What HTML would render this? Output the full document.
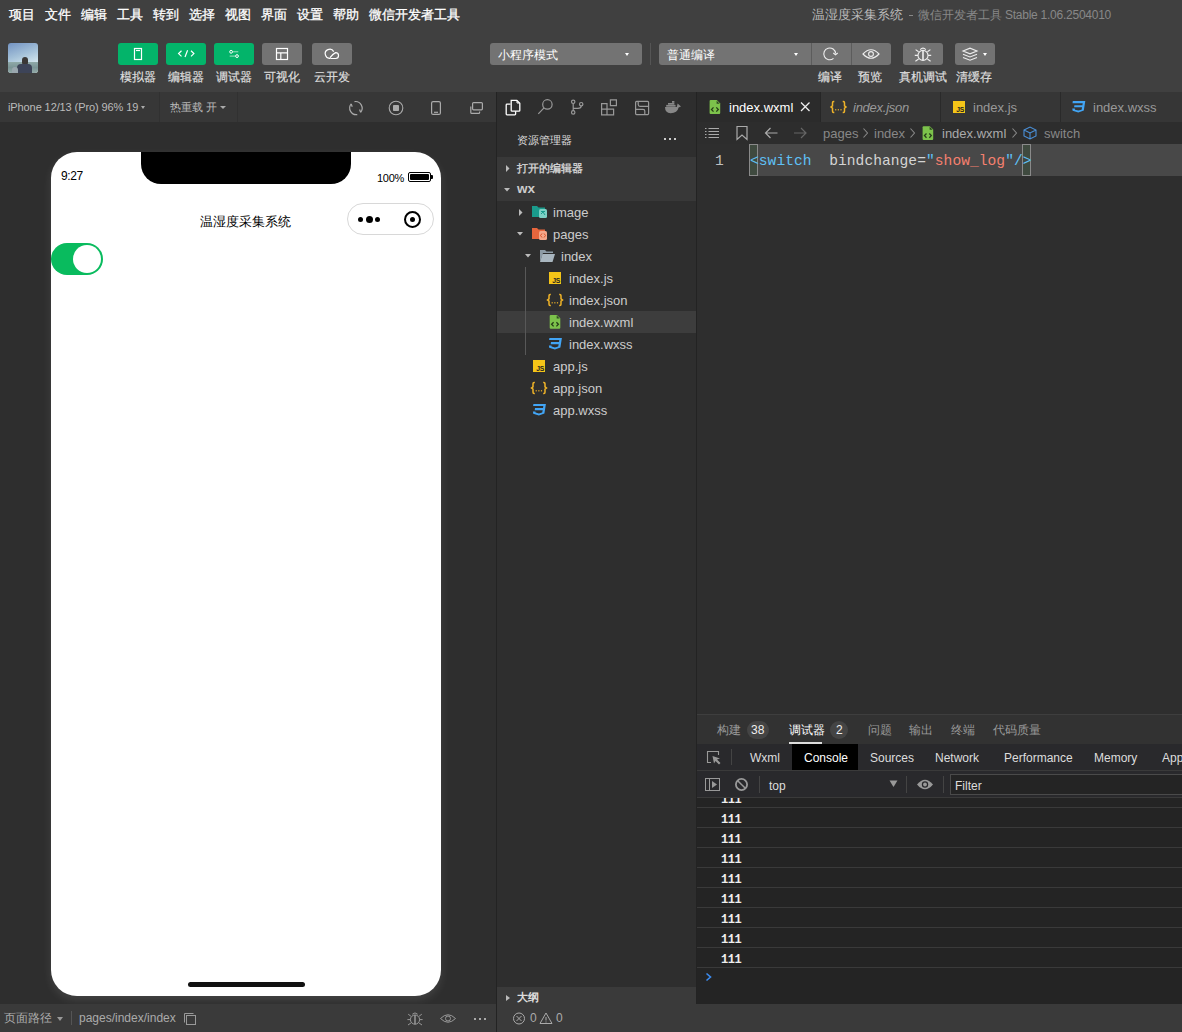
<!DOCTYPE html>
<html><head><meta charset="utf-8">
<style>
*{box-sizing:border-box;margin:0;padding:0}
html,body{width:1182px;height:1032px;overflow:hidden;background:#2d2d2d;font-family:"Liberation Sans",sans-serif;color:#ccc}
.a{position:absolute}
.t{position:absolute;white-space:nowrap;line-height:1}
svg{position:absolute;overflow:visible}
</style></head><body>
<!-- top bars -->
<div class="a" style="left:0;top:0;width:1182px;height:92px;background:#404040"></div>
<div class="t" style="left:9px;top:8px;font-size:13px;color:#fff;word-spacing:0;-webkit-text-stroke:0.3px #fff">
<span style="margin-right:10px">项目</span><span style="margin-right:10px">文件</span><span style="margin-right:10px">编辑</span><span style="margin-right:10px">工具</span><span style="margin-right:10px">转到</span><span style="margin-right:10px">选择</span><span style="margin-right:10px">视图</span><span style="margin-right:10px">界面</span><span style="margin-right:10px">设置</span><span style="margin-right:10px">帮助</span><span>微信开发者工具</span></div>
<div class="t" style="left:812px;top:8px;font-size:13px;color:#bbb">温湿度采集系统</div>
<div class="a" style="left:909px;top:15px;width:4px;height:1px;background:#888"></div>
<div class="t" style="left:918px;top:9px;font-size:12px;color:#888">微信开发者工具</div>
<div class="t" style="left:1005px;top:9px;font-size:12px;color:#888;letter-spacing:-0.25px">Stable 1.06.2504010</div>


<!-- avatar -->
<div class="a" style="left:8px;top:43px;width:30px;height:30px;border-radius:3px;overflow:hidden;background:linear-gradient(160deg,#7393c2 0%,#a3c0d8 40%,#d6e8ee 75%,#eef4ec 100%)">
  <div class="a" style="left:0;top:18.5px;width:30px;height:11.5px;background:linear-gradient(180deg,#8fa9a8 0%,#7b9596 50%,#93aaa8 100%)"></div>
  <div class="a" style="left:13.5px;top:14px;width:6px;height:7.5px;border-radius:3px 3px 2.5px 2.5px;background:#3b3836"></div>
  <div class="a" style="left:9px;top:20.5px;width:15px;height:10px;border-radius:4px 4px 0 0;background:#3d4458"></div>
  <div class="a" style="left:4px;top:24px;width:6px;height:6px;border-radius:3px 3px 0 0;background:#9aa7ae"></div>
</div>
<!-- green buttons -->
<div class="a" style="left:118px;top:43px;width:40px;height:22px;border-radius:3px;background:#03b46a"></div>
<div class="a" style="left:166px;top:43px;width:40px;height:22px;border-radius:3px;background:#03b46a"></div>
<div class="a" style="left:214px;top:43px;width:40px;height:22px;border-radius:3px;background:#03b46a"></div>
<div class="a" style="left:262px;top:43px;width:40px;height:22px;border-radius:3px;background:#737373"></div>
<div class="a" style="left:312px;top:43px;width:40px;height:22px;border-radius:3px;background:#737373"></div>
<svg style="left:0;top:0" width="1182" height="92" fill="none" stroke="#fff" stroke-width="1.2">
  <!-- simulator icon -->
  <rect x="134.5" y="48.5" width="7" height="11" />
  <line x1="136" y1="50.5" x2="140" y2="50.5"/>
  <!-- editor code icon -->
  <path d="M181.5 50.8 L178.6 53.6 L181.5 56.4 M191 50.8 L193.9 53.6 L191 56.4 M185 57 L187.6 50.2"/>
  <!-- debugger sliders -->
  <path d="M233 51.8 H238.3 M229.7 56.1 H235.2" stroke="#9fe0c0" stroke-width="1"/>
  <circle cx="231.1" cy="51.8" r="1.4" stroke-width="1"/><circle cx="237" cy="56.1" r="1.4" stroke-width="1"/>
  <!-- visual layout -->
  <rect x="276.5" y="48.5" width="11" height="11"/><path d="M276.5 52.8 H287.5 M280.8 52.8 V59.5"/>
  <!-- cloud -->
  <path d="M333.7 51.6 A4.5 4.5 0 1 0 330.8 58.1"/>
  <path d="M330 57.6 Q332.3 54.3 335.6 52.6 A2.95 2.95 0 0 1 335.6 58.5 H331"/>
</svg>
<div class="t" style="left:120px;top:71px;font-size:12px;color:#ddd;-webkit-text-stroke:0.2px #ddd">模拟器</div>
<div class="t" style="left:168px;top:71px;font-size:12px;color:#ddd;-webkit-text-stroke:0.2px #ddd">编辑器</div>
<div class="t" style="left:216px;top:71px;font-size:12px;color:#ddd;-webkit-text-stroke:0.2px #ddd">调试器</div>
<div class="t" style="left:264px;top:71px;font-size:12px;color:#ddd;-webkit-text-stroke:0.2px #ddd">可视化</div>
<div class="t" style="left:314px;top:71px;font-size:12px;color:#ddd;-webkit-text-stroke:0.2px #ddd">云开发</div>
<!-- mode dropdown -->
<div class="a" style="left:490px;top:43px;width:152px;height:22px;border-radius:3px;background:#737373"></div>
<div class="t" style="left:498px;top:49px;font-size:12px;color:#fff">小程序模式</div>
<div class="a" style="left:624.5px;top:53px;width:0;height:0;border-left:2.5px solid transparent;border-right:2.5px solid transparent;border-top:3.5px solid #fff"></div>
<div class="a" style="left:650px;top:43px;width:1px;height:22px;background:#555"></div>
<div class="a" style="left:659px;top:43px;width:232px;height:22px;border-radius:3px;background:#737373"></div>
<div class="a" style="left:811px;top:43px;width:1px;height:22px;background:#5c5c5c"></div>
<div class="a" style="left:851px;top:43px;width:1px;height:22px;background:#5c5c5c"></div>
<div class="t" style="left:667px;top:49px;font-size:12px;color:#fff">普通编译</div>
<div class="a" style="left:793.5px;top:53px;width:0;height:0;border-left:2.5px solid transparent;border-right:2.5px solid transparent;border-top:3.5px solid #fff"></div>
<div class="a" style="left:903px;top:43px;width:40px;height:22px;border-radius:3px;background:#737373"></div>
<div class="a" style="left:955px;top:43px;width:40px;height:22px;border-radius:3px;background:#737373"></div>
<div class="a" style="left:983px;top:53px;width:0;height:0;border-left:2.5px solid transparent;border-right:2.5px solid transparent;border-top:3px solid #fff"></div>
<svg style="left:0;top:0" width="1182" height="92" fill="none" stroke="#eee" stroke-width="1.1">
  <path d="M833.5 58.4 A5.9 5.9 0 1 1 835.6 53.5"/><path d="M833.3 53 L835.5 54.8 L837.7 53"/>
  <path d="M863 54 Q871 45.5 879 54 Q871 62.5 863 54 Z"/><circle cx="871" cy="54" r="2.4"/>
  <path d="M920.2 49.6 Q923 46.6 925.8 49.6"/>
  <circle cx="923" cy="55.4" r="5"/>
  <path d="M923 50.4 V60.4" stroke-width="1.6"/>
  <path d="M918.6 51.8 L915.6 49.6 M918 55.4 H914.8 M918.6 59 L915.4 61.2 M927.4 51.8 L930.4 49.6 M928 55.4 H931.2 M927.4 59 L930.6 61.2"/>
  <path d="M963 51 L970 48.2 L977 51 L970 53.8 Z M963 54.2 L970 57 L977 54.2 M963 57.4 L970 60.2 L977 57.4"/>
</svg>
<div class="t" style="left:818px;top:71px;font-size:12px;color:#ddd;-webkit-text-stroke:0.2px #ddd">编译</div>
<div class="t" style="left:858px;top:71px;font-size:12px;color:#ddd;-webkit-text-stroke:0.2px #ddd">预览</div>
<div class="t" style="left:899px;top:71px;font-size:12px;color:#ddd;-webkit-text-stroke:0.2px #ddd">真机调试</div>
<div class="t" style="left:956px;top:71px;font-size:12px;color:#ddd;-webkit-text-stroke:0.2px #ddd">清缓存</div>


<!-- simulator toolbar -->
<div class="a" style="left:0;top:92px;width:496px;height:30px;background:#373737"></div>
<div class="t" style="left:8px;top:102px;font-size:11px;color:#bbb;letter-spacing:-0.1px">iPhone 12/13 (Pro) 96% 19</div>
<div class="a" style="left:141px;top:106px;width:0;height:0;border-left:2.5px solid transparent;border-right:2.5px solid transparent;border-top:3.5px solid #aaa"></div>
<div class="a" style="left:159px;top:92px;width:1px;height:30px;background:#313131"></div>
<div class="t" style="left:170px;top:102px;font-size:11px;color:#bbb">热重载 开</div>
<div class="a" style="left:220px;top:106px;width:0;height:0;border-left:3px solid transparent;border-right:3px solid transparent;border-top:3.5px solid #aaa"></div>
<div class="a" style="left:237px;top:92px;width:1px;height:30px;background:#313131"></div>
<svg style="left:0;top:0" width="496" height="130" fill="none" stroke="#aaa" stroke-width="1.1">
  <path d="M354.5 101.6 A6.6 6.6 0 0 1 360.6 112.3 M359.6 109.5 L360.6 112.4 M357.3 114.6 A6.6 6.6 0 0 1 351.2 103.9 M352.2 106.8 L351.2 103.9" stroke-width="1.2"/>
  <circle cx="396" cy="108" r="6.8"/><rect x="393" y="105" width="6" height="6" rx="0.8" fill="#aaa" stroke="none"/>
  <rect x="431.6" y="101.6" width="8.8" height="12.8" rx="1.5" stroke-width="1.2"/><line x1="434" y1="112.3" x2="438" y2="112.3" stroke-width="1.2"/>
  <rect x="472.6" y="102.6" width="9.8" height="7.2" rx="1" stroke-width="1.2"/><path d="M470.8 106.6 V112.5 Q470.8 113.4 471.7 113.4 H478.7 Q479.6 113.4 479.6 112.5 V111.6" stroke-width="1.2"/>
</svg>
<!-- simulator area -->
<div class="a" style="left:0;top:122px;width:496px;height:882px;background:#2e2e2e"></div>
<!-- phone -->
<div class="a" style="left:51px;top:152px;width:390px;height:844px;background:#fff;border-radius:26px;box-shadow:0 4px 10px rgba(255,255,255,0.1)"></div>
<div class="a" style="left:141px;top:152px;width:210px;height:32px;background:#000;border-radius:0 0 20px 20px"></div>
<div class="t" style="left:61px;top:170px;font-size:12px;color:#000;letter-spacing:-0.4px">9:27</div>
<div class="t" style="left:377px;top:173px;font-size:11px;color:#000;letter-spacing:-0.3px">100%</div>
<div class="a" style="left:408px;top:172px;width:23px;height:10px;border:1.3px solid #000;border-radius:2px;padding:1.3px"><div style="width:100%;height:100%;background:#000;border-radius:1px"></div></div>
<div class="a" style="left:431px;top:175px;width:2px;height:4px;background:#000;border-radius:0 1px 1px 0"></div>
<div class="t" style="left:200px;top:215px;font-size:13px;color:#000">温湿度采集系统</div>
<div class="a" style="left:347px;top:203px;width:87px;height:32px;border:1px solid #d8d8d8;border-radius:16px"></div>
<div class="a" style="left:358px;top:217px;width:5px;height:5px;border-radius:50%;background:#000"></div>
<div class="a" style="left:365.5px;top:215.5px;width:7px;height:7px;border-radius:50%;background:#000"></div>
<div class="a" style="left:375px;top:217px;width:5px;height:5px;border-radius:50%;background:#000"></div>
<div class="a" style="left:403.5px;top:211px;width:17px;height:17px;border-radius:50%;border:2px solid #000"></div>
<div class="a" style="left:409.5px;top:217px;width:5px;height:5px;border-radius:50%;background:#000"></div>
<div class="a" style="left:51px;top:243px;width:52px;height:32px;border-radius:16px;background:#09bb5e"></div>
<div class="a" style="left:73px;top:245px;width:28px;height:28px;border-radius:50%;background:#fff"></div>
<div class="a" style="left:188px;top:982px;width:117px;height:5px;border-radius:3px;background:#111"></div>
<div class="a" style="left:496px;top:92px;width:1px;height:940px;background:#232323"></div>

<!-- explorer -->
<div class="a" style="left:497px;top:92px;width:199px;height:912px;background:#2e2e2e"></div>
<svg style="left:0;top:0" width="700" height="130" fill="none" stroke="#999" stroke-width="1.2">
  <path d="M510.5 104.2 H507 Q506.2 104.2 506.2 105 V114 Q506.2 114.8 507 114.8 H514.8 Q515.6 114.8 515.6 114 V111.3" stroke="#fff" stroke-width="1.3"/>
  <path d="M511.2 100.3 H516.8 L519.8 103.3 V110.4 Q519.8 111.2 519 111.2 H512 Q511.2 111.2 511.2 110.4 Z" stroke="#fff" stroke-width="1.3"/>
  <path d="M517 100.5 V103 H519.6" stroke="#fff" stroke-width="1"/>
  <circle cx="547.4" cy="104.4" r="4.7"/><path d="M544 107.8 L538.3 113.8"/>
  <circle cx="573.2" cy="101.8" r="1.7"/><circle cx="573.2" cy="112.4" r="1.7"/><circle cx="581.2" cy="104.2" r="1.7"/>
  <path d="M573.2 103.5 V110.7 M581.2 105.9 Q581.2 108.3 578 108.3 H573.2"/>
  <path d="M601.6 103.6 H607 V114.8 H601.6 Z M601.6 109.2 H613.6 V114.8 H607 M610.4 99.8 H616.4 V105.6 H610.4 Z"/>
  <rect x="635.6" y="101.4" width="13" height="13.2" rx="1"/>
  <path d="M638.2 101.4 V104.6 Q638.2 106.4 640 106.4 H648.6 M635.6 109.3 H643 Q644.8 109.3 644.8 111.1 V114.6"/>
</svg>
<svg style="left:0;top:0" width="700" height="130"><path d="M665 107 H676.8 L677.6 103.6 L681 106.6 L678.6 107.6 Q677.4 113.2 670.6 113.2 Q665 112.8 665 107 Z" fill="#888"/><rect x="666.2" y="104.9" width="9.4" height="1.8" fill="#888"/><rect x="668" y="103" width="6.4" height="1.7" fill="#888"/><rect x="672" y="101" width="2.4" height="1.8" fill="#888"/></svg>
<div class="t" style="left:517px;top:135px;font-size:11px;color:#ddd">资源管理器</div>
<div class="a" style="left:664px;top:138px;width:2px;height:2px;background:#ccc"></div>
<div class="a" style="left:669px;top:138px;width:2px;height:2px;background:#ccc"></div>
<div class="a" style="left:674px;top:138px;width:2px;height:2px;background:#ccc"></div>
<div class="a" style="left:497px;top:157px;width:199px;height:44px;background:#383838"></div>
<div class="t" style="left:517px;top:163px;font-size:11px;color:#ccc;font-weight:bold">打开的编辑器</div>
<div class="t" style="left:517px;top:182px;font-size:13.5px;color:#ccc;font-weight:bold">wx</div>
<div class="a" style="left:497px;top:311px;width:199px;height:22px;background:#3d3d3d"></div>
<div class="a" style="left:525px;top:267px;width:1px;height:88px;background:#585858"></div>
<svg style="left:0;top:0" width="700" height="430">
  <path d="M506 165 L509.5 168.5 L506 172 Z" fill="#bbb"/>
  <path d="M504 188 L510 188 L507 191.5 Z" fill="#bbb"/>
  <path d="M519 209 L522.5 212.5 L519 216 Z" fill="#bbb"/>
  <path d="M517 232 L523 232 L520 235.5 Z" fill="#bbb"/>
  <path d="M525 254 L531 254 L528 257.5 Z" fill="#bbb"/>
  <!-- image folder (teal) -->
  <path d="M532 206 H537 L538.5 207.5 H545 V217 H532 Z" fill="#1a9b8c"/>
  <rect x="539" y="209" width="8" height="9" rx="1.5" fill="#7ccfc4"/><path d="M541 211.5 H545 M541 214 L543 212 L545 215" stroke="#1a9b8c" stroke-width="1" fill="none"/>
  <!-- pages folder (orange) -->
  <path d="M532 228 H537 L538.5 229.5 H545 V239 H532 Z" fill="#e8663d"/>
  <rect x="539" y="231" width="8" height="9" rx="1.5" fill="#f4a78a"/><path d="M542 233.5 L540.5 235.5 L542 237.5 M544 233.5 L545.5 235.5 L544 237.5" stroke="#d84a1f" stroke-width="0.9" fill="none"/>
  <!-- index folder (grey-blue open) -->
  <path d="M540 250 H545 L546.5 251.5 H553 V253 H543 L540 262 Z" fill="#8d9ba5"/>
  <path d="M542.5 254 H555 L552.5 262 H540 Z" fill="#a9b6bf"/>
  <!-- index.js --><rect x="549" y="272" width="12" height="12" fill="#f5c518"/><text x="552.3" y="283" font-size="6.8" font-family="Liberation Sans" font-weight="bold" fill="#222" letter-spacing="-0.3">JS</text><path d="M550.8 294.6 H550.1 Q549.0 294.6 549.0 295.7 V298.8 L547.5 300.0 L549.0 301.2 V304.3 Q549.0 305.4 550.1 305.4 H550.8 M559.2 294.6 H559.9 Q561.0 294.6 561.0 295.7 V298.8 L562.5 300.0 L561.0 301.2 V304.3 Q561.0 305.4 559.9 305.4 H559.2" stroke="#f0b429" stroke-width="1.5" fill="none" stroke-linejoin="miter"/><rect x="551.6" y="302.2" width="1.2" height="1.2" fill="#f0b429"/><rect x="554.25" y="302.2" width="1.2" height="1.2" fill="#f0b429"/><rect x="556.9" y="302.2" width="1.2" height="1.2" fill="#f0b429"/><path d="M550.7 314.9 H556.9000000000001 L560.3000000000001 318.29999999999995 V327.79999999999995 Q560.3000000000001 328.79999999999995 559.3000000000001 328.79999999999995 H550.7 Q549.7 328.79999999999995 549.7 327.79999999999995 V315.9 Q549.7 314.9 550.7 314.9 Z" fill="#7cc24b"/><path d="M556.7 315.5 L559.7 318.49999999999994 H556.7 Z" fill="#2f4a22"/><path d="M553.6 322.2 L551.6 324.29999999999995 L553.6 326.4 M556.4000000000001 322.2 L558.4000000000001 324.29999999999995 L556.4000000000001 326.4" stroke="#263d18" stroke-width="1.3" fill="none"/><path d="M549.4 337.9 L561.9 337.9 L560.4 347.4 L554.9 349.4 L549.2 347.7 L548.9 345.5 L551.4 345.5 L551.6 346.6 L554.9 347.5 L558.2 346.6 L558.7 344.2 L550.7 344.2 L551.0 342.1 L559.0 342.1 L559.3 340.1 L549.1 340.1 Z" fill="#42a5f5"/><rect x="533" y="360" width="12" height="12" fill="#f5c518"/><text x="536.3" y="371" font-size="6.8" font-family="Liberation Sans" font-weight="bold" fill="#222" letter-spacing="-0.3">JS</text><path d="M534.8 382.6 H534.1 Q533.0 382.6 533.0 383.7 V386.8 L531.5 388.0 L533.0 389.2 V392.3 Q533.0 393.4 534.1 393.4 H534.8 M543.2 382.6 H543.9 Q545.0 382.6 545.0 383.7 V386.8 L546.5 388.0 L545.0 389.2 V392.3 Q545.0 393.4 543.9 393.4 H543.2" stroke="#f0b429" stroke-width="1.5" fill="none" stroke-linejoin="miter"/><rect x="535.6" y="390.2" width="1.2" height="1.2" fill="#f0b429"/><rect x="538.25" y="390.2" width="1.2" height="1.2" fill="#f0b429"/><rect x="540.9" y="390.2" width="1.2" height="1.2" fill="#f0b429"/><path d="M533.4 403.9 L545.9 403.9 L544.4 413.4 L538.9 415.4 L533.2 413.7 L532.9 411.5 L535.4 411.5 L535.6 412.6 L538.9 413.5 L542.2 412.6 L542.7 410.2 L534.7 410.2 L535.0 408.1 L543.0 408.1 L543.3 406.1 L533.1 406.1 Z" fill="#42a5f5"/>
</svg>
<div class="t" style="left:553px;top:206px;font-size:13px;color:#ccc">image</div>
<div class="t" style="left:553px;top:228px;font-size:13px;color:#ccc">pages</div>
<div class="t" style="left:561px;top:250px;font-size:13px;color:#ccc">index</div>
<div class="t" style="left:569px;top:272px;font-size:13px;color:#ccc">index.js</div>
<div class="t" style="left:569px;top:294px;font-size:13px;color:#ccc">index.json</div>
<div class="t" style="left:569px;top:316px;font-size:13px;color:#ccc">index.wxml</div>
<div class="t" style="left:569px;top:338px;font-size:13px;color:#ccc">index.wxss</div>
<div class="t" style="left:553px;top:360px;font-size:13px;color:#ccc">app.js</div>
<div class="t" style="left:553px;top:382px;font-size:13px;color:#ccc">app.json</div>
<div class="t" style="left:553px;top:404px;font-size:13px;color:#ccc">app.wxss</div>
<!-- outline -->
<div class="a" style="left:497px;top:987px;width:199px;height:17px;background:#3a3a3a"></div>
<div class="a" style="left:506px;top:995px;width:0;height:0;border-top:3.5px solid transparent;border-bottom:3.5px solid transparent;border-left:4px solid #bbb"></div>
<div class="t" style="left:517px;top:992px;font-size:11px;color:#ddd;font-weight:bold">大纲</div>
<div class="a" style="left:696px;top:92px;width:1px;height:912px;background:#232323"></div>

<!-- editor -->
<div class="a" style="left:697px;top:92px;width:485px;height:622px;background:#2e2e2e"></div>
<div class="a" style="left:697px;top:92px;width:485px;height:30px;background:#363636"></div>
<div class="a" style="left:697px;top:92px;width:124px;height:30px;background:#2b2b2b"></div>
<div class="a" style="left:940px;top:92px;width:1px;height:30px;background:#2a2a2a"></div>
<div class="a" style="left:1060px;top:92px;width:1px;height:30px;background:#2a2a2a"></div>
<div class="a" style="left:820px;top:92px;width:1px;height:30px;background:#262626"></div>
<div class="a" style="left:697px;top:122px;width:485px;height:22px;background:#2d2d2d"></div>
<svg style="left:0;top:0" width="1182" height="200">
  <path d="M710.6 100.1 H716.8000000000001 L720.2 103.5 V113.0 Q720.2 114.0 719.2 114.0 H710.6 Q709.6 114.0 709.6 113.0 V101.1 Q709.6 100.1 710.6 100.1 Z" fill="#7cc24b"/><path d="M716.6 100.69999999999999 L719.6 103.7 H716.6 Z" fill="#2f4a22"/><path d="M713.5 107.39999999999999 L711.5 109.5 L713.5 111.6 M716.3000000000001 107.39999999999999 L718.3000000000001 109.5 L716.3000000000001 111.6" stroke="#263d18" stroke-width="1.3" fill="none"/>
  <path d="M801 102.5 L809.5 111 M809.5 102.5 L801 111" stroke="#eee" stroke-width="1.3"/>
  <path d="M834.3 101.6 H833.6 Q832.5 101.6 832.5 102.7 V105.8 L831.0 107.0 L832.5 108.2 V111.3 Q832.5 112.4 833.6 112.4 H834.3 M842.7 101.6 H843.4 Q844.5 101.6 844.5 102.7 V105.8 L846.0 107.0 L844.5 108.2 V111.3 Q844.5 112.4 843.4 112.4 H842.7" stroke="#f0b429" stroke-width="1.5" fill="none" stroke-linejoin="miter"/><rect x="835.1" y="109.2" width="1.2" height="1.2" fill="#f0b429"/><rect x="837.75" y="109.2" width="1.2" height="1.2" fill="#f0b429"/><rect x="840.4" y="109.2" width="1.2" height="1.2" fill="#f0b429"/>
  <rect x="953" y="101" width="12" height="12" fill="#f5c518"/><text x="956.3" y="112" font-size="6.8" font-family="Liberation Sans" font-weight="bold" fill="#222" letter-spacing="-0.3">JS</text>
  <path d="M1072.8 101.0 L1085.3 101.0 L1083.8 110.5 L1078.3 112.5 L1072.6 110.8 L1072.3 108.6 L1074.8 108.6 L1075.0 109.7 L1078.3 110.6 L1081.6 109.7 L1082.1 107.3 L1074.1 107.3 L1074.4 105.2 L1082.4 105.2 L1082.7 103.2 L1072.5 103.2 Z" fill="#42a5f5"/>
  <!-- breadcrumb icons -->
  <path d="M705 128.5 H706.5 M705 131.5 H706.5 M705 134.5 H706.5 M705 137.5 H706.5 M708.5 128.5 H719 M708.5 131.5 H719 M708.5 134.5 H719 M708.5 137.5 H719" stroke="#aaa" stroke-width="1" fill="none"/>
  <path d="M737 126.5 H747 V139.5 L742 135 L737 139.5 Z" stroke="#aaa" stroke-width="1.2" fill="none"/>
  <path d="M777.5 133 H765.5 M770.5 128 L765.5 133 L770.5 138" stroke="#aaa" stroke-width="1.2" fill="none"/>
  <path d="M794 133 H806 M801 128 L806 133 L801 138" stroke="#666" stroke-width="1.2" fill="none"/>
  <path d="M863.5 128.5 L867.5 133 L863.5 137.5 M910.5 128.5 L914.5 133 L910.5 137.5 M1012.5 128.5 L1016.5 133 L1012.5 137.5" stroke="#888" stroke-width="1.1" fill="none"/>
  <path d="M923.6 126.2 H929.8000000000001 L933.2 129.6 V139.1 Q933.2 140.1 932.2 140.1 H923.6 Q922.6 140.1 922.6 139.1 V127.2 Q922.6 126.2 923.6 126.2 Z" fill="#7cc24b"/><path d="M929.6 126.8 L932.6 129.79999999999998 H929.6 Z" fill="#2f4a22"/><path d="M926.5 133.5 L924.5 135.6 L926.5 137.7 M929.3000000000001 133.5 L931.3000000000001 135.6 L929.3000000000001 137.7" stroke="#263d18" stroke-width="1.3" fill="none"/>
  <path d="M1024 130 L1030 127 L1036 130 V136 L1030 139 L1024 136 Z M1024 130 L1030 133 L1036 130 M1030 133 V139" stroke="#4a90d9" stroke-width="1.1" fill="none"/>
</svg>
<div class="t" style="left:729px;top:101px;font-size:13px;color:#fff">index.wxml</div>
<div class="t" style="left:853px;top:101px;font-size:13px;color:#999;font-style:italic;letter-spacing:-0.25px">index.json</div>
<div class="t" style="left:973px;top:101px;font-size:13px;color:#999">index.js</div>
<div class="t" style="left:1093px;top:101px;font-size:13px;color:#999">index.wxss</div>
<div class="t" style="left:823px;top:127px;font-size:13px;color:#888">pages</div>
<div class="t" style="left:874px;top:127px;font-size:13px;color:#888">index</div>
<div class="t" style="left:942px;top:127px;font-size:13px;color:#aaa">index.wxml</div>
<div class="t" style="left:1044px;top:127px;font-size:13px;color:#888">switch</div>
<!-- code line -->
<div class="a" style="left:749px;top:144px;width:433px;height:32px;background:#484848"></div>
<div class="t" style="left:715px;top:154px;font-size:14.6px;color:#c0c0c0;font-family:'Liberation Mono',monospace">1</div>
<div class="a" style="left:749px;top:144px;width:9px;height:32px;border:1px solid #8a8a8a;background:#3f4a3f"></div>
<div class="a" style="left:1022px;top:144px;width:9px;height:32px;border:1px solid #8a8a8a;background:#3f4a3f"></div>
<div class="t" style="left:750px;top:154px;font-size:14.6px;letter-spacing:0.04px;color:#d4d4d4;font-family:'Liberation Mono',monospace;white-space:pre"><span style="color:#5fc0f5">&lt;switch</span>  bindchange=<span style="color:#5fc0f5">"</span><span style="color:#f5806f">show_log</span><span style="color:#5fc0f5">"/&gt;</span></div>

<!-- bottom panel -->
<div class="a" style="left:697px;top:714px;width:485px;height:1px;background:#3e3e3e"></div>
<div class="a" style="left:697px;top:715px;width:485px;height:29px;background:#323232"></div>
<div class="t" style="left:717px;top:724px;font-size:12px;color:#999">构建</div>
<div class="a" style="left:747px;top:721px;width:22px;height:18px;border-radius:9px;background:#444"></div>
<div class="t" style="left:751px;top:724px;font-size:12px;color:#eee">38</div>
<div class="t" style="left:789px;top:724px;font-size:12px;color:#fff">调试器</div>
<div class="a" style="left:789px;top:742px;width:33px;height:2px;background:#ddd"></div>
<div class="a" style="left:830px;top:721px;width:18px;height:18px;border-radius:9px;background:#444"></div>
<div class="t" style="left:836px;top:724px;font-size:12px;color:#eee">2</div>
<div class="t" style="left:868px;top:724px;font-size:12px;color:#999">问题</div>
<div class="t" style="left:909px;top:724px;font-size:12px;color:#999">输出</div>
<div class="t" style="left:951px;top:724px;font-size:12px;color:#999">终端</div>
<div class="t" style="left:993px;top:724px;font-size:12px;color:#999">代码质量</div>
<!-- devtools tabs -->
<div class="a" style="left:697px;top:744px;width:485px;height:26px;background:#29292c"></div>
<div class="a" style="left:792px;top:744px;width:66px;height:26px;background:#000"></div>
<div class="a" style="left:731px;top:749px;width:1px;height:16px;background:#444"></div>
<svg style="left:0;top:0" width="1182" height="1032">
  <path d="M711 762.5 H707.5 V751.5 H718.5 V755" stroke="#999" stroke-width="1.1" fill="none"/>
  <path d="M712.5 756 L720 758.5 L717 759.5 L720.5 763 L719 764.5 L715.5 761 L714 763.5 Z" fill="#999"/>
</svg>
<div class="t" style="left:750px;top:752px;font-size:12px;color:#ddd">Wxml</div>
<div class="t" style="left:804px;top:752px;font-size:12px;color:#fff">Console</div>
<div class="t" style="left:870px;top:752px;font-size:12px;color:#ddd">Sources</div>
<div class="t" style="left:935px;top:752px;font-size:12px;color:#ddd">Network</div>
<div class="t" style="left:1004px;top:752px;font-size:12px;color:#ddd">Performance</div>
<div class="t" style="left:1094px;top:752px;font-size:12px;color:#ddd">Memory</div>
<div class="t" style="left:1162px;top:752px;font-size:12px;color:#ddd">App</div>
<!-- console toolbar -->
<div class="a" style="left:697px;top:770px;width:485px;height:1px;background:#3a3a3a"></div>
<div class="a" style="left:697px;top:771px;width:485px;height:26px;background:#29292c"></div>
<div class="a" style="left:697px;top:797px;width:485px;height:1px;background:#3a3a3a"></div>
<svg style="left:0;top:0" width="1182" height="1032">
  <rect x="705.5" y="778.5" width="14" height="12" stroke="#999" stroke-width="1" fill="none"/>
  <path d="M709.5 778.5 V790.5" stroke="#999" stroke-width="1"/>
  <path d="M712 781 L717 784.5 L712 788 Z" fill="#999"/>
  <circle cx="741.5" cy="784.5" r="5.6" stroke="#999" stroke-width="1.8" fill="none"/>
  <path d="M737.7 780.7 L745.3 788.3" stroke="#999" stroke-width="1.5"/>
  <path d="M889.5 780.5 H897.5 L893.5 787 Z" fill="#999"/>
  <path d="M917 784.5 Q925 775 933 784.5 Q925 794 917 784.5 Z" fill="#999"/>
  <circle cx="925" cy="784.5" r="3.2" fill="#29292c"/><circle cx="925" cy="784.5" r="1.9" fill="#999"/>
</svg>
<div class="a" style="left:759px;top:776px;width:1px;height:17px;background:#444"></div>
<div class="t" style="left:769px;top:780px;font-size:12px;color:#ddd">top</div>
<div class="a" style="left:906px;top:776px;width:1px;height:17px;background:#444"></div>
<div class="a" style="left:943px;top:776px;width:1px;height:17px;background:#444"></div>
<div class="a" style="left:950px;top:774px;width:240px;height:21px;border:1px solid #4a4a4a;background:#242424"></div>
<div class="t" style="left:955px;top:780px;font-size:12px;color:#ddd">Filter</div>
<!-- console rows -->
<div class="a" style="left:697px;top:798px;width:485px;height:206px;background:#242424;overflow:hidden">
  <div class="a" style="left:0;top:9px;width:485px;height:1px;background:#3a3a3a"></div>
  <div class="t" style="left:24px;top:-4px;font-size:12px;color:#eee;font-weight:bold;font-family:'Liberation Mono',monospace;letter-spacing:-0.4px">111</div>
  <div class="t" style="left:24px;top:16px;font-size:12px;color:#eee;font-weight:bold;font-family:'Liberation Mono',monospace;letter-spacing:-0.4px">111</div>
<div class="a" style="left:0;top:29px;width:485px;height:1px;background:#3a3a3a"></div>
<div class="t" style="left:24px;top:36px;font-size:12px;color:#eee;font-weight:bold;font-family:'Liberation Mono',monospace;letter-spacing:-0.4px">111</div>
<div class="a" style="left:0;top:49px;width:485px;height:1px;background:#3a3a3a"></div>
<div class="t" style="left:24px;top:56px;font-size:12px;color:#eee;font-weight:bold;font-family:'Liberation Mono',monospace;letter-spacing:-0.4px">111</div>
<div class="a" style="left:0;top:69px;width:485px;height:1px;background:#3a3a3a"></div>
<div class="t" style="left:24px;top:76px;font-size:12px;color:#eee;font-weight:bold;font-family:'Liberation Mono',monospace;letter-spacing:-0.4px">111</div>
<div class="a" style="left:0;top:89px;width:485px;height:1px;background:#3a3a3a"></div>
<div class="t" style="left:24px;top:96px;font-size:12px;color:#eee;font-weight:bold;font-family:'Liberation Mono',monospace;letter-spacing:-0.4px">111</div>
<div class="a" style="left:0;top:109px;width:485px;height:1px;background:#3a3a3a"></div>
<div class="t" style="left:24px;top:116px;font-size:12px;color:#eee;font-weight:bold;font-family:'Liberation Mono',monospace;letter-spacing:-0.4px">111</div>
<div class="a" style="left:0;top:129px;width:485px;height:1px;background:#3a3a3a"></div>
<div class="t" style="left:24px;top:136px;font-size:12px;color:#eee;font-weight:bold;font-family:'Liberation Mono',monospace;letter-spacing:-0.4px">111</div>
<div class="a" style="left:0;top:149px;width:485px;height:1px;background:#3a3a3a"></div>
<div class="t" style="left:24px;top:156px;font-size:12px;color:#eee;font-weight:bold;font-family:'Liberation Mono',monospace;letter-spacing:-0.4px">111</div>
<div class="a" style="left:0;top:169px;width:485px;height:1px;background:#3a3a3a"></div>

</div>
<svg style="left:0;top:0" width="1182" height="1032"><path d="M706.5 973.5 L710.5 977 L706.5 980.5" stroke="#3c8cf0" stroke-width="1.6" fill="none"/></svg>

<!-- status bar -->
<div class="a" style="left:0;top:1004px;width:496px;height:28px;background:#3a3a3a"></div>
<div class="t" style="left:4px;top:1012px;font-size:12px;color:#aaa">页面路径</div>
<div class="a" style="left:57px;top:1017px;width:0;height:0;border-left:3px solid transparent;border-right:3px solid transparent;border-top:4px solid #999"></div>
<div class="a" style="left:71px;top:1011px;width:1px;height:14px;background:#555"></div>
<div class="t" style="left:79px;top:1012px;font-size:12px;color:#aaa">pages/index/index</div>
<svg style="left:0;top:0" width="1182" height="1032" fill="none" stroke="#999" stroke-width="1">
  <path d="M184.5 1022.5 V1013.5 H193.5"/><rect x="186.5" y="1015.5" width="9" height="9"/>
  <path d="M412.4 1014.2 Q415 1011.6 417.6 1014.2"/><circle cx="415" cy="1019.6" r="4.6"/><path d="M415 1015 V1024.2" stroke-width="1.5"/><path d="M410.9 1016.2 L408.2 1014.2 M410.4 1019.6 H407.4 M410.9 1023 L408 1025 M419.1 1016.2 L421.8 1014.2 M419.6 1019.6 H422.6 M419.1 1023 L422 1025"/>
  <path d="M440.5 1018.5 Q448 1011 455.5 1018.5 Q448 1026 440.5 1018.5 Z"/><circle cx="448" cy="1018.5" r="2.5"/>
</svg>
<div class="a" style="left:474px;top:1018px;width:2px;height:2px;background:#aaa"></div>
<div class="a" style="left:479px;top:1018px;width:2px;height:2px;background:#aaa"></div>
<div class="a" style="left:484px;top:1018px;width:2px;height:2px;background:#aaa"></div>
<div class="a" style="left:497px;top:1004px;width:685px;height:28px;background:#3a3a3a"></div>

<svg style="left:0;top:0" width="1182" height="1032" fill="none" stroke="#aaa" stroke-width="1">
  <circle cx="519" cy="1018.5" r="5.5"/><path d="M516.5 1016 L521.5 1021 M521.5 1016 L516.5 1021"/>
  <path d="M546 1013 L552 1023.5 H540 Z"/><path d="M546 1017 V1020.5 M546 1021.5 V1022.5"/>
</svg>
<div class="t" style="left:530px;top:1012px;font-size:12px;color:#aaa">0</div>
<div class="t" style="left:556px;top:1012px;font-size:12px;color:#aaa">0</div>
</body></html>
